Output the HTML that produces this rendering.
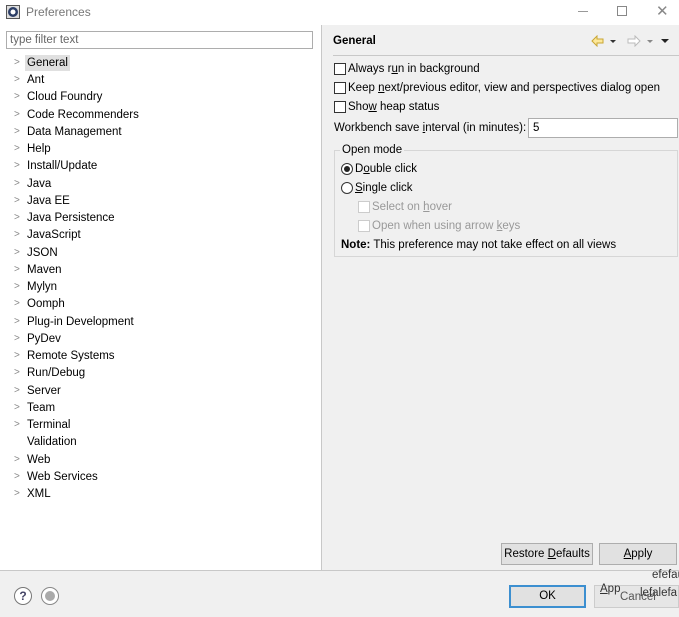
<!DOCTYPE html>
<html><head><meta charset="utf-8"><style>
*{box-sizing:border-box;margin:0;padding:0}
body{width:679px;height:617px;overflow:hidden;background:#f0f0f0;font-family:"Liberation Sans",sans-serif;font-size:11.5px;color:#000;position:relative}
.a{position:absolute}
.title{left:0;top:0;width:679px;height:25px;background:#fff}
.left{left:0;top:25px;width:322px;height:545px;background:#fff;border-right:1px solid #c8c8c8}
.filter{left:6px;top:31px;width:307px;height:18px;border:1px solid #adadad;background:#fff;color:#666;padding-left:3px;line-height:17px}
.tree div{position:absolute;left:27px;height:16px;line-height:16px;white-space:nowrap}
.tree span{position:absolute;left:14px;color:#888;font-size:10px;line-height:16px}
.cb{position:absolute;width:12px;height:12px;border:1px solid #333;background:#fff}
.cb.d{border-color:#ccc}
.rd{position:absolute;width:12px;height:12px;border:1px solid #333;border-radius:50%;background:#fff}
.btn{position:absolute;background:#e1e1e1;border:1px solid #adadad;text-align:center;line-height:20px}
u{text-decoration:underline}
</style></head><body>
<div class="a title"></div>
<svg class="a" style="left:6px;top:5px" width="14" height="14"><rect x="0.5" y="0.5" width="13" height="13" fill="#ddd" stroke="#555"/><circle cx="7" cy="7" r="5" fill="#2c3e66"/><circle cx="7" cy="7" r="2.5" fill="#fff"/></svg>
<div class="a" style="left:26px;top:5px;color:#777;font-size:12px">Preferences</div>
<div class="a" style="left:578px;top:11px;width:10px;height:1px;background:#999"></div>
<div class="a" style="left:617px;top:6px;width:10px;height:10px;border:1px solid #888"></div>
<div class="a" style="left:656px;top:2px;color:#888;font-size:15px">✕</div>
<div class="a left"></div>
<div class="a filter">type filter text</div>
<div class="tree">
<div style="top:55px;left:25px;background:#e0e0e0;padding:0 2px">General</div>
</div>
<div class="tree" id="t"></div>
<div class="a" style="left:0;top:570px;width:679px;height:1px;background:#c8c8c8"></div>
<div class="a" style="left:333px;top:35px;font-weight:bold">General</div>
<svg class="a" style="left:590px;top:35px" width="90" height="12"><path d="M2 6 L7 1 V4 H13 V8 H7 V11 Z" fill="#fde89a" stroke="#c9a634"/><path d="M20 5h6l-3 3z" fill="#333"/><path d="M50 6 L45 1 V4 H38 V8 H45 V11 Z" fill="#fff" stroke="#bbb"/><path d="M57 5h6l-3 3z" fill="#888"/><path d="M71 4h8l-4 4z" fill="#222"/></svg>
<div class="a" style="left:333px;top:55px;width:346px;height:1px;background:#c8c8c8"></div>
<div class="cb" style="left:334px;top:63px"></div><div class="a" style="left:348px;top:63px">Always r<u>u</u>n in background</div>
<div class="cb" style="left:334px;top:82px"></div><div class="a" style="left:348px;top:82px">Keep <u>n</u>ext/previous editor, view and perspectives dialog open</div>
<div class="cb" style="left:334px;top:101px"></div><div class="a" style="left:348px;top:101px">Sho<u>w</u> heap status</div>
<div class="a" style="left:334px;top:122px">Workbench save <u>i</u>nterval (in minutes):</div>
<div class="a" style="left:528px;top:118px;width:150px;height:20px;border:1px solid #adadad;background:#fff;padding-left:4px;line-height:19px">5</div>
<div class="a" style="left:334px;top:150px;width:344px;height:107px;border:1px solid #d6d6d6"></div>
<div class="a" style="left:340px;top:144px;background:#f0f0f0;padding:0 2px">Open mode</div>
<div class="rd" style="left:341px;top:163px"><div style="position:absolute;left:2px;top:2px;width:6px;height:6px;border-radius:50%;background:#222"></div></div>
<div class="a" style="left:355px;top:163px">D<u>o</u>uble click</div>
<div class="rd" style="left:341px;top:182px"></div>
<div class="a" style="left:355px;top:182px"><u>S</u>ingle click</div>
<div class="cb d" style="left:358px;top:201px"></div><div class="a" style="left:372px;top:201px;color:#999">Select on <u>h</u>over</div>
<div class="cb d" style="left:358px;top:220px"></div><div class="a" style="left:372px;top:220px;color:#999">Open when using arrow <u>k</u>eys</div>
<div class="a" style="left:341px;top:239px"><b>Note:</b> This preference may not take effect on all views</div>
<div class="btn" style="left:501px;top:543px;width:92px;height:22px">Restore <u>D</u>efaults</div>
<div class="btn" style="left:599px;top:543px;width:78px;height:22px"><u>A</u>pply</div>
<div class="btn" style="left:509px;top:585px;width:77px;height:23px;border:2px solid #3c8fd0;line-height:19px">OK</div>
<div class="btn" style="left:594px;top:585px;width:85px;height:23px;background:#e6e6e6;border-color:#ccc"></div>
<div class="a" style="left:600px;top:583px;color:#333"><u>A</u>pp</div>
<div class="a" style="left:652px;top:569px;color:#333">efefau</div>
<div class="a" style="left:640px;top:587px;color:#333">lefalefa</div>
<div class="a" style="left:620px;top:591px;color:#555">Cancel</div>
<div class="a" style="left:14px;top:587px;width:18px;height:18px;border:1px solid #777;border-radius:50%;text-align:center;line-height:16px;color:#446;font-weight:bold;font-size:12px;background:#fff">?</div>
<div class="a" style="left:41px;top:587px;width:18px;height:18px;border:1px solid #888;border-radius:50%;background:#fff"><div style="position:absolute;left:3px;top:3px;width:10px;height:10px;border-radius:50%;background:#aaa"></div></div>
<script>
var n=["General","Ant","Cloud Foundry","Code Recommenders","Data Management","Help","Install/Update","Java","Java EE","Java Persistence","JavaScript","JSON","Maven","Mylyn","Oomph","Plug-in Development","PyDev","Remote Systems","Run/Debug","Server","Team","Terminal","Validation","Web","Web Services","XML"],h="";
for(var i=0;i<n.length;i++){var y=55+i*17.24;h+='<div style="top:'+y+'px;left:27px">'+(i==0?'':n[i])+'</div>';if(n[i]!="Validation")h+='<span style="top:'+y+'px">&gt;</span>';}
document.getElementById("t").innerHTML=h;
</script>
</body></html>
